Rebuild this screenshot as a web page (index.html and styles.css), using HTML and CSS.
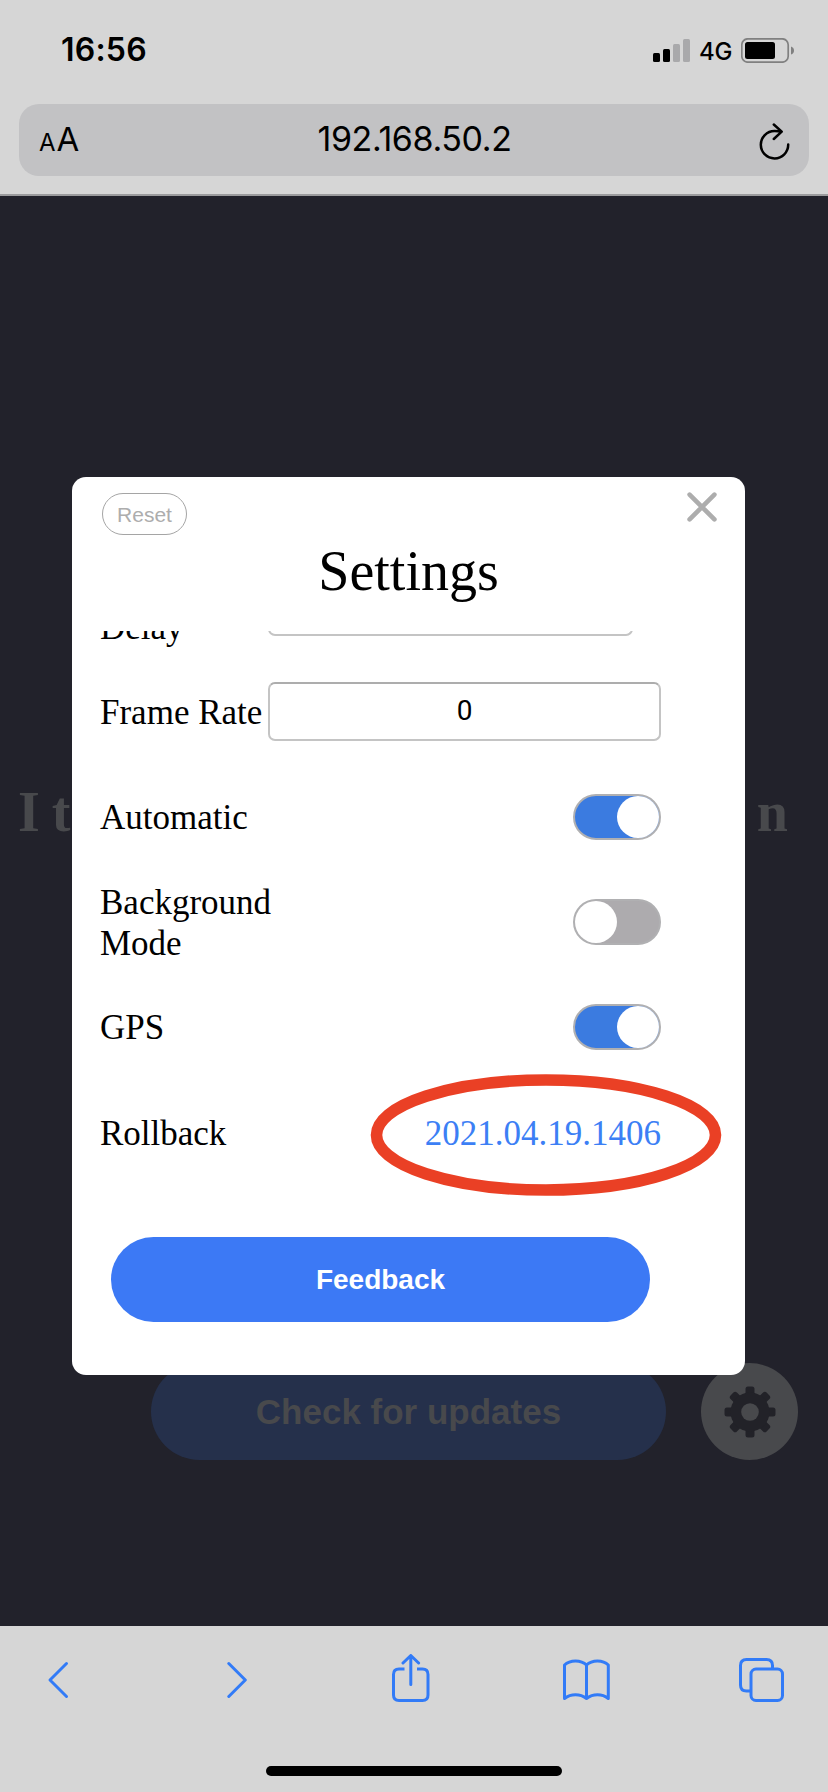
FILE: index.html
```html
<!DOCTYPE html>
<html lang="en">
<head>
<meta charset="utf-8">
<title>Settings</title>
<link rel="stylesheet" href="styles.css">
</head>
<body>
<header class="browser-top">
  <div class="status">
    <span class="clock">16:56</span>
    <div class="status-right">
      <svg width="37" height="23" viewBox="0 0 37 23"><rect y="14" width="7" height="9" rx="1.5"/><rect x="10" y="10" width="7" height="13" rx="1.5"/><g fill="#a9a9ab"><rect x="20" y="5" width="7" height="18" rx="1.5"/><rect x="30" width="7" height="23" rx="1.5"/></g></svg>
      <span class="network">4G</span>
      <svg width="53" height="25" viewBox="0 0 53 25"><rect x=".8" y=".8" width="46.4" height="23.4" rx="6" fill="none" stroke="#808080" stroke-width="1.7"/><rect x="4" y="4" width="30" height="17" rx="2.5"/><path d="M50 8.500q3 1 3 4t-3 4z" fill="#808080"/></svg>
    </div>
  </div>
  <div class="url-bar">
    <span class="text-size"><small>A</small>A</span>
    <span class="url">192.168.50.2</span>
    <svg class="reload" width="32" height="38" viewBox="758 121 32 38" fill="none" stroke="#000" stroke-width="2.500" stroke-linecap="round" stroke-linejoin="round"><path d="M788.200 143.500a13.700 13.700 0 1 1-13.700-13.500q4 0 7 .7M773.800 123.500l7.900 7.200-7.900 7.300"/></svg>
  </div>
</header>

<main class="page">
  <div class="headline"><span>I t</span><span>n</span></div>
  <div class="actions">
    <button class="update">Check for updates</button>
    <button class="gear" aria-label="Settings">
      <svg width="52" height="52" viewBox="-26 -26 52 52" fill="#222228">
        <rect x="-4.500" y="-25.500" width="9" height="51" rx="2.500"/>
        <rect x="-4.500" y="-25.500" width="9" height="51" rx="2.500" transform="rotate(45)"/>
        <rect x="-4.500" y="-25.500" width="9" height="51" rx="2.500" transform="rotate(90)"/>
        <rect x="-4.500" y="-25.500" width="9" height="51" rx="2.500" transform="rotate(135)"/>
        <circle r="19.500"/><circle r="8.800" fill="#48494c"/>
      </svg>
    </button>
  </div>

  <section class="modal">
    <div class="modal-top">
      <button class="reset">Reset</button>
      <svg width="30" height="30" viewBox="0 0 30 30" stroke="#adadad" stroke-width="4.600" stroke-linecap="round"><path d="M2.600 2.600l24.800 24.800M27.400 2.600L2.600 27.400"/></svg>
    </div>
    <h1 class="title">Settings</h1>
    <div class="scroller">
      <div class="row first"><span class="label">Delay</span><div class="field short"></div></div>
      <div class="row"><span class="label">Frame Rate</span><div class="field">0</div></div>
      <div class="row"><span class="label">Automatic</span><div class="toggle on"><i class="knob"></i></div></div>
      <div class="row"><span class="label">Background Mode</span><div class="toggle"><i class="knob"></i></div></div>
      <div class="row"><span class="label">GPS</span><div class="toggle on"><i class="knob"></i></div></div>
      <div class="row"><span class="label">Rollback</span><a class="version">2021.04.19.1406</a></div>
      <button class="feedback">Feedback</button>
    </div>
    <svg class="ring" width="352" height="122" viewBox="0 0 352 122" fill="none"><ellipse cx="176" cy="61" rx="169.500" ry="55" stroke="#ea4025" stroke-width="11.600"/></svg>
  </section>
</main>

<footer class="browser-bottom">
  <nav class="tools">
    <svg width="22" height="50" viewBox="47 1654 22 50"><path d="M66.500 1663.500L50 1680l16.500 16.500"/></svg>
    <svg width="22" height="50" viewBox="227 1654 22 50"><path d="M228.800 1663.500L245.300 1680l-16.500 16.500"/></svg>
    <svg width="38" height="50" viewBox="392 1654 38 50"><path class="butt" d="M404.500 1669H399q-5.500 0-5.500 5.500v20.500q0 5.500 5.500 5.500h23.500q5.500 0 5.500-5.500v-20.500q0-5.500-5.500-5.500H417"/><path d="M410.800 1684.500v-28.500M403 1663l7.800-7.500 7.800 7.500"/></svg>
    <svg width="48" height="50" viewBox="562 1654 48 50"><path d="M586.500 1698.500V1665C581 1659.500 570 1659.500 564.500 1665V1698.500C571 1693.500 580 1693.500 586.500 1698.500C593 1693.500 602 1693.500 608.300 1698.500V1665C603 1659.500 592 1659.500 586.500 1665"/></svg>
    <svg width="46" height="50" viewBox="739 1654 46 50"><rect x="751" y="1669" width="31.500" height="31.500" rx="5"/><path class="butt" d="M751 1691h-4.500q-6 0-6-6v-19.500q0-6 6-6h20q6 0 6 6v3.500"/></svg>
  </nav>
  <div class="home-bar"></div>
</footer>
</body>
</html>
```
FILE: styles.css
```css
* { box-sizing: border-box; }
body {
  margin: 0;
  width: 828px;
  height: 1792px;
  display: flex;
  flex-direction: column;
  overflow: hidden;
  background: #d6d6d6;
  color: #000;
  font-family: "Liberation Serif", serif;
}
svg { display: block; flex: none; }
button {
  border: 0;
  padding: 0;
  font-family: "Liberation Sans", sans-serif;
}

/* browser chrome */
.browser-top {
  height: 196px;
  border-bottom: 2px solid #9b9b9d;
  font-family: Inter, sans-serif;
}
.status {
  height: 104px;
  padding: 0 34px 4px 61px;
  display: flex;
  align-items: center;
  justify-content: space-between;
}
.clock { font-size: 32px; font-weight: 600; letter-spacing: 0.2px; padding-bottom: 1px; }
.status-right { display: flex; align-items: center; }
.network {
  width: 51px;
  padding-left: 9px;
  padding-top: 2px;
  font-size: 24px;
  font-weight: 450;
  letter-spacing: -0.3px;
}
.url-bar {
  height: 72px;
  margin: 0 19px;
  padding: 0 19px 0 20px;
  border-radius: 20px;
  background: #c2c2c4;
  display: grid;
  grid-template-columns: 60px 1fr 60px;
  align-items: center;
}
.text-size { font-size: 33px; line-height: 70px; }
.text-size small { font-size: 24px; margin-right: 1px; }
.url { text-align: center; font-size: 34px; letter-spacing: -0.4px; padding-bottom: 5px; }
.reload { justify-self: end; }

.browser-bottom { height: 166px; }
.tools {
  padding: 28px 0 0 47px;
  display: grid;
  grid-template-columns: 180px 165px 170px 177px 46px;
}
.tools svg {
  fill: none;
  stroke: #327bf7;
  stroke-width: 3;
  stroke-linecap: round;
  stroke-linejoin: round;
}
.tools .butt { stroke-linecap: butt; }
.home-bar {
  width: 296px;
  height: 10px;
  margin: 62px auto 0;
  border-radius: 5px;
  background: #000;
}

/* dimmed page */
.page {
  position: relative;
  height: 1430px;
  padding-top: 584px;
  background: #22222b;
}
.headline {
  height: 64px;
  padding: 0 40px 0 18px;
  display: flex;
  justify-content: space-between;
  font-size: 56px;
  line-height: 64px;
  font-weight: bold;
  word-spacing: -2px;
  color: #48494c;
}
.actions {
  margin-top: 519px;
  padding-left: 151px;
  display: flex;
  gap: 35px;
}
.update {
  width: 515px;
  height: 97px;
  border-radius: 49px;
  background: #25304b;
  color: #48494c;
  font-size: 35px;
  font-weight: bold;
}
.gear {
  width: 97px;
  height: 97px;
  border-radius: 50%;
  background: #48494c;
  display: grid;
  place-items: center;
}

/* settings dialog */
.modal {
  position: absolute;
  left: 72px;
  top: 281px;
  width: 673px;
  height: 898px;
  border-radius: 14px;
  background: #fff;
}
.modal-top {
  height: 58px;
  padding: 15px 28px 0 30px;
  display: flex;
  justify-content: space-between;
}
.reset {
  width: 85px;
  height: 42px;
  margin-top: 1px;
  padding-top: 2px;
  border: 1px solid #a5a5a5;
  border-radius: 21px;
  background: #fff;
  color: #adadad;
  font-size: 21px;
}
.title {
  margin: 5px 0 0;
  height: 91px;
  font-size: 56px;
  line-height: 62px;
  font-weight: normal;
  text-align: center;
}
.scroller {
  height: 744px;
  overflow: hidden;
  padding: 0 84px 0 28px;
}
.row {
  height: 105.100px;
  display: flex;
  align-items: center;
  justify-content: space-between;
  font-size: 35px;
  line-height: 41px;
}
.row.first { margin-top: -77px; justify-content: flex-start; }
.label { width: 168px; padding-top: 2px; white-space: nowrap; }
.row.first .label { padding-top: 42px; }
.row:has(.toggle) .label { white-space: normal; }
.field {
  width: 393px;
  height: 59px;
  border: 2px solid #c4c4c4;
  border-top-color: #adadad;
  border-radius: 7px;
  background: #fff;
  font: 28px/54px Roboto, sans-serif;
  text-align: center;
}
.field.short { width: 365px; }
.toggle {
  width: 88px;
  height: 46px;
  border: 2px solid #b0b0b2;
  border-radius: 23px;
  background: #adabae;
  display: flex;
}
.toggle.on { background: #3b7be0; justify-content: flex-end; }
.knob { width: 42px; height: 42px; border-radius: 50%; background: #fff; }
.version { padding-top: 2px; color: #3c7ff5; }
.feedback {
  display: block;
  width: 539px;
  height: 85px;
  margin: 52px 0 0 11px;
  padding-top: 2px;
  border-radius: 43px;
  background: #3c79f5;
  color: #fff;
  font-size: 28px;
  font-weight: bold;
}
.ring { position: absolute; left: 298px; top: 597px; }
```
